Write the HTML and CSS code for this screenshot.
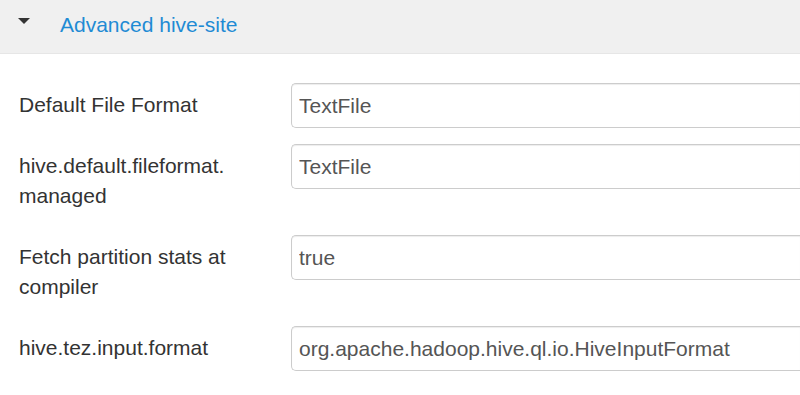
FILE: index.html
```html
<!DOCTYPE html>
<html>
<head>
<meta charset="utf-8">
<link rel="stylesheet" href="styles.css">
</head>
<body>
<div class="panel">
  <div class="panel-heading">
    <span class="caret"></span>
    <span class="panel-title">Advanced hive-site</span>
  </div>
  <div class="panel-body">
    <div class="form-group">
      <label class="control-label">Default File Format</label>
      <input class="form-control" type="text" value="TextFile">
    </div>
    <div class="form-group">
      <label class="control-label">hive.default.fileformat.<wbr>managed</label>
      <input class="form-control" type="text" value="TextFile">
    </div>
    <div class="form-group">
      <label class="control-label">Fetch partition stats at compiler</label>
      <input class="form-control" type="text" value="true">
    </div>
    <div class="form-group">
      <label class="control-label">hive.tez.input.format</label>
      <input class="form-control" type="text" value="org.apache.hadoop.hive.ql.io.HiveInputFormat">
    </div>
  </div>
</div>
</body>
</html>
```

FILE: styles.css
```css
html, body {
  margin: 0;
  padding: 0;
  background: #ffffff;
  overflow: hidden;
}
body {
  font-family: "Liberation Sans", Arial, Helvetica, sans-serif;
  font-size: 21px;
  line-height: 30px;
  color: #333333;
  width: 800px;
  height: 395px;
}
.panel-heading {
  height: 53px;
  background: #f0f0f0;
  border-bottom: 1px solid #e6e6e6;
  display: flex;
  align-items: flex-start;
  box-sizing: content-box;
}
.caret {
  width: 0;
  height: 0;
  border-left: 6px solid transparent;
  border-right: 6px solid transparent;
  border-top: 6px solid #333333;
  margin: 18px 0 0 18px;
}
.panel-title {
  color: #1f8bd4;
  margin: 10px 0 0 30px;
}
.panel-body {
  padding: 29px 0 0 19px;
}
.form-group {
  display: flex;
  align-items: flex-start;
  margin-bottom: 16px;
}
.control-label {
  width: 257px;
  padding: 7px 15px 8px 0;
  flex: none;
  font-weight: normal;
}
.form-control {
  flex: 1;
  min-width: 0;
  height: 45px;
  box-sizing: border-box;
  padding: 0 7px;
  margin: 0;
  font-family: "Liberation Sans", Arial, Helvetica, sans-serif;
  font-size: 21px;
  line-height: 30px;
  color: #555555;
  background: #ffffff;
  border: 1px solid #cccccc;
  border-right: none;
  border-radius: 5px 0 0 5px;
  box-shadow: inset 0 1px 1px rgba(0, 0, 0, 0.075);
  outline: none;
}
```
